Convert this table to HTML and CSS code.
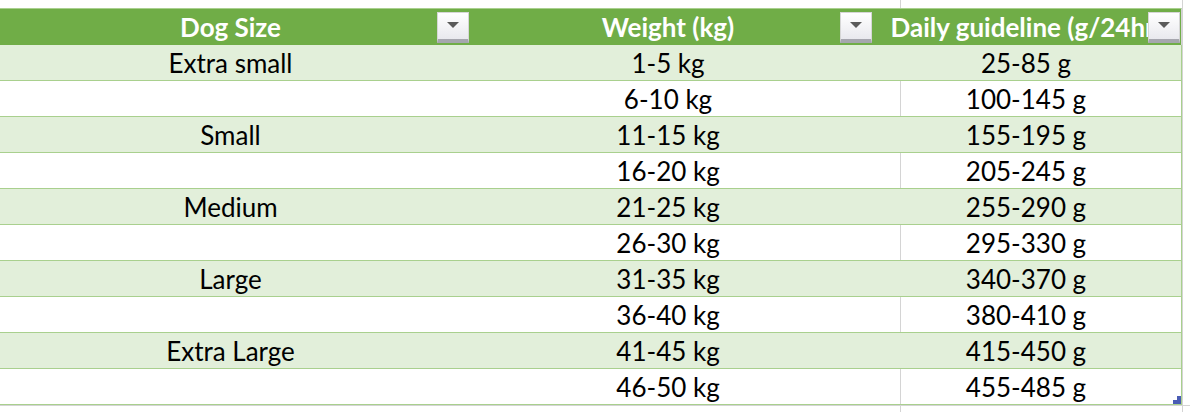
FILE: index.html
```html
<!DOCTYPE html>
<html>
<head>
<meta charset="utf-8">
<link rel="stylesheet" href="styles.css">
</head>
<body>
<div class="sheet">
  <div class="table">
    <div class="row head">
      <div class="cell c1">Dog Size<span class="filter"><span class="tri"></span></span></div>
      <div class="cell c2">Weight (kg)<span class="filter"><span class="tri"></span></span></div>
      <div class="cell c3"><span class="clip">Daily guideline (g/24hr)</span><span class="filter"><span class="tri"></span></span></div>
    </div>
    <div class="row band"><div class="cell c1">Extra small</div><div class="cell c2">1-5 kg</div><div class="cell c3">25-85 g</div></div>
    <div class="row"><div class="cell c1"></div><div class="cell c2">6-10 kg</div><div class="cell c3">100-145 g</div></div>
    <div class="row band"><div class="cell c1">Small</div><div class="cell c2">11-15 kg</div><div class="cell c3">155-195 g</div></div>
    <div class="row"><div class="cell c1"></div><div class="cell c2">16-20 kg</div><div class="cell c3">205-245 g</div></div>
    <div class="row band"><div class="cell c1">Medium</div><div class="cell c2">21-25 kg</div><div class="cell c3">255-290 g</div></div>
    <div class="row"><div class="cell c1"></div><div class="cell c2">26-30 kg</div><div class="cell c3">295-330 g</div></div>
    <div class="row band"><div class="cell c1">Large</div><div class="cell c2">31-35 kg</div><div class="cell c3">340-370 g</div></div>
    <div class="row"><div class="cell c1"></div><div class="cell c2">36-40 kg</div><div class="cell c3">380-410 g</div></div>
    <div class="row band"><div class="cell c1">Extra Large</div><div class="cell c2">41-45 kg</div><div class="cell c3">415-450 g</div></div>
    <div class="row last"><div class="cell c1"></div><div class="cell c2">46-50 kg</div><div class="cell c3">455-485 g<span class="handle"></span></div></div>
  </div>
</div>
</body>
</html>
```
FILE: styles.css
```css
html, body {
  margin: 0;
  padding: 0;
  background: #fff;
  overflow: hidden;
}
.sheet {
  width: 1190px;
  height: 412px;
  padding-top: 8px;
  box-sizing: border-box;
  font-family: Lato, "Liberation Sans", sans-serif;
  font-size: 26px;
  color: #000;
  background-color: #fff;
  background-image:
    linear-gradient(to right, transparent 900px, #d4d4d4 900px, #d4d4d4 901px, transparent 901px),
    linear-gradient(to right, transparent 1182px, #d4d4d4 1182px, #d4d4d4 1183px, transparent 1183px),
    linear-gradient(to bottom, transparent 405px, #d4d4d4 405px, #d4d4d4 406px, transparent 406px);
}
.table {
  margin-left: -8px;
  width: 1190px;
}
.row {
  display: flex;
  height: 36px;
  box-sizing: border-box;
  border-bottom: 1px solid #a9d08e;
  border-right: 1px solid #a9d08e;
}
.row.band {
  background: #e2efda;
}
.row.head {
  height: 37px;
  border-top: 1px solid #a9d08e;
  border-bottom: none;
  border-right: 1px solid #d4d4d4;
  background: #70ad47;
  color: #fff;
  font-weight: bold;
}
.cell {
  position: relative;
  display: flex;
  align-items: center;
  justify-content: center;
  white-space: nowrap;
  padding-top: 1px;
  box-sizing: border-box;
}
.head .cell {
  padding-top: 0;
}
.c1 { width: 477px; }
.c2 { width: 402px; padding-right: 4px; }
.c3 { flex: 1; }
.clip {
  display: block;
}
.filter {
  position: absolute;
  top: 3px;
  right: 0;
  width: 32px;
  height: 31px;
  box-sizing: border-box;
  background: linear-gradient(#ffffff, #e9e9ee);
  border: 1px solid #d6d6d6;
  border-bottom: 4px solid #a6a6ae;
  display: flex;
  justify-content: center;
  padding-top: 9px;
}
.c2 .filter { right: -1px; }
.c3 .filter { right: 1px; }
.tri {
  display: block;
  width: 0;
  height: 0;
  border-left: 6px solid transparent;
  border-right: 6px solid transparent;
  border-top: 6px solid #5a5a5a;
}
.handle {
  position: absolute;
  right: 0;
  bottom: 0;
  width: 8px;
  height: 8px;
  background: linear-gradient(to right, transparent 4px, #4a5cb4 4px);
}
.handle::after {
  content: "";
  position: absolute;
  left: 0;
  bottom: 0;
  width: 8px;
  height: 4px;
  background: #4a5cb4;
}
```
